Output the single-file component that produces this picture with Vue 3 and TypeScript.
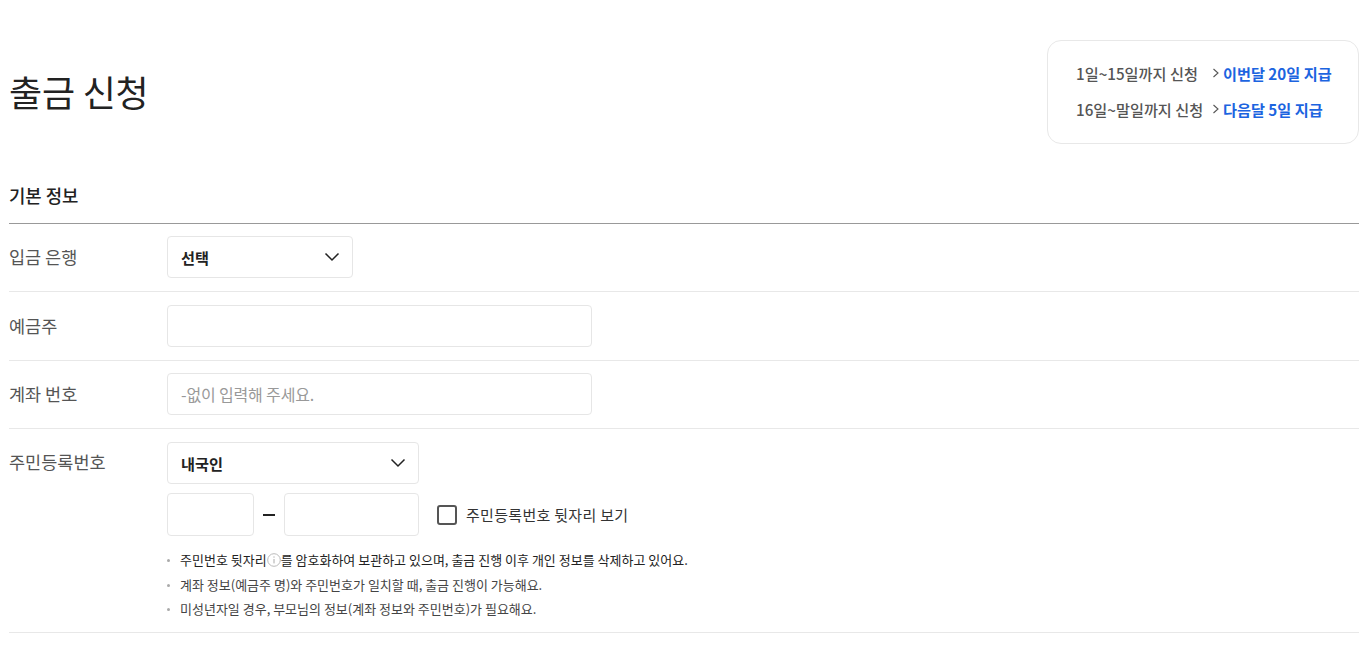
<script setup lang="ts">
const notes: string[] = [
  '계좌 정보(예금주 명)와 주민번호가 일치할 때, 출금 진행이 가능해요.',
  '미성년자일 경우, 부모님의 정보(계좌 정보와 주민번호)가 필요해요.',
]
</script>

<template>
  <main class="page">
    <header class="top">
      <h1 class="title">출금 신청</h1>
      <div class="schedule">
        <div class="sched-row">
          <span class="when">1일~15일까지 신청</span>
          <svg class="arrow" width="8" height="12" viewBox="0 0 8 12"><path d="M1.5 2 6 6 1.5 10" fill="none" stroke="#555" stroke-width="1.1" /></svg>
          <span class="pay">이번달 20일 지급</span>
        </div>
        <div class="sched-row">
          <span class="when">16일~말일까지 신청</span>
          <svg class="arrow" width="8" height="12" viewBox="0 0 8 12"><path d="M1.5 2 6 6 1.5 10" fill="none" stroke="#555" stroke-width="1.1" /></svg>
          <span class="pay">다음달 5일 지급</span>
        </div>
      </div>
    </header>

    <h2 class="section">기본 정보</h2>

    <section class="row">
      <div class="label">입금 은행</div>
      <div class="field select w186 lift">
        <span>선택</span>
        <svg width="16" height="10" viewBox="0 0 16 10"><path d="M1.5 1.5 8 8 14.5 1.5" fill="none" stroke="#222" stroke-width="1.5" /></svg>
      </div>
    </section>

    <section class="row tall">
      <div class="label">예금주</div>
      <input class="field w425" type="text" />
    </section>

    <section class="row">
      <div class="label">계좌 번호</div>
      <input class="field w425 lift" type="text" placeholder="-없이 입력해 주세요." />
    </section>

    <section class="row id-row">
      <div class="label">주민등록번호</div>
      <div class="id-body">
        <div class="field select w252">
          <span>내국인</span>
          <svg width="16" height="10" viewBox="0 0 16 10"><path d="M1.5 1.5 8 8 14.5 1.5" fill="none" stroke="#222" stroke-width="1.5" /></svg>
        </div>
        <div class="id-inputs">
          <input class="field w87" type="text" />
          <span class="dash"></span>
          <input class="field w135" type="text" />
          <label class="check">
            <span class="box"></span>
            <span>주민등록번호 뒷자리 보기</span>
          </label>
        </div>
        <ul class="notes">
          <li class="strong">
            주민번호 뒷자리<svg class="info" width="14" height="14" viewBox="0 0 14 14"><circle cx="7" cy="7" r="6.3" fill="none" stroke="#bbb" /><path d="M7 6v4.4M7 3.4v1.3" stroke="#aaa" fill="none" /></svg>를 암호화하여 보관하고 있으며, 출금 진행 이후 개인 정보를 삭제하고 있어요.
          </li>
          <li v-for="n in notes" :key="n">{{ n }}</li>
        </ul>
      </div>
    </section>
  </main>
</template>

<style>
html, body { margin: 0; background: #fff; }
</style>

<style scoped>
.page {
  box-sizing: border-box;
  width: 1369px;
  padding: 40px 10px 0 9px;
  font-family: "Noto Sans CJK KR", "Noto Sans", sans-serif;
  color: #222;
}
.top {
  display: flex;
  justify-content: space-between;
  align-items: center;
  height: 104px;
}
.title {
  margin: 0 0 2px;
  font-size: 36px;
  font-weight: 400;
  line-height: 52px;
  letter-spacing: -0.2px;
  color: #222;
}
.schedule {
  box-sizing: border-box;
  width: 312px;
  height: 104px;
  border: 1px solid #e8e8e8;
  border-radius: 14px;
  padding: 20px 0 0 28px;
  display: flex;
  flex-direction: column;
  gap: 12px;
}
.sched-row {
  display: flex;
  align-items: center;
  height: 24px;
  font-size: 15.2px;
  font-weight: 500;
}
.when { color: #555; width: 131px; white-space: nowrap; }
.arrow { margin: 0 3px 0 5px; flex: none; }
.pay { color: #1c64e0; font-weight: 700; white-space: nowrap; }
.section {
  margin: 0;
  height: 80px;
  box-sizing: border-box;
  padding-top: 39px;
  border-bottom: 1px solid #999;
  font-size: 17.8px;
  font-weight: 500;
  line-height: 24px;
  color: #222;
}
.row {
  display: flex;
  align-items: center;
  box-sizing: border-box;
  height: 68px;
  border-bottom: 1px solid #e8e8e8;
}
.tall { height: 69px; }
.label {
  width: 158px;
  flex: none;
  font-size: 17.5px;
  color: #555;
  line-height: 26px;
  margin-bottom: 1px;
}
.field {
  box-sizing: border-box;
  height: 42px;
  border: 1px solid #e6e6e6;
  border-radius: 4px;
  background: #fff;
  outline: none;
  padding: 0 13px;
  font-family: inherit;
  font-size: 16px;
  letter-spacing: -0.15px;
  color: #222;
}
.lift { margin-bottom: 1px; }
.field::placeholder { color: #999; opacity: 1; }
.select {
  display: flex;
  align-items: center;
  justify-content: space-between;
  font-weight: 700;
  font-size: 15.2px;
  letter-spacing: 0;
  padding-right: 12px;
  padding-bottom: 1px;
}
.w186 { width: 186px; }
.w425 { width: 425px; }
.w252 { width: 252px; }
.w87 { width: 87px; height: 43px; }
.w135 { width: 135px; height: 43px; }
.id-row {
  align-items: flex-start;
  height: 204px;
  padding-top: 13px;
}
.id-row .label { padding-top: 7px; }
.id-body { display: flex; flex-direction: column; }
.id-inputs {
  display: flex;
  align-items: center;
  margin-top: 9px;
}
.dash {
  width: 12px;
  height: 2px;
  background: #222;
  margin: 0 9px;
}
.check {
  display: flex;
  align-items: center;
  margin-left: 18px;
  font-size: 15px;
  letter-spacing: 0.3px;
  color: #333;
  font-weight: 400;
}
.box {
  box-sizing: border-box;
  width: 20px;
  height: 20px;
  border: 2px solid #555;
  border-radius: 3px;
  margin-right: 9px;
}
.notes {
  list-style: none;
  margin: 12px 0 0;
  padding: 0;
  font-size: 13px;
  line-height: 24.5px;
  color: #444;
}
.notes li {
  position: relative;
  padding-left: 13px;
}
.notes li::before {
  content: "";
  position: absolute;
  left: 0;
  top: 11px;
  width: 3px;
  height: 3px;
  background: #aaa;
  border-radius: 50%;
}
.notes .strong { color: #222; }
.info { vertical-align: -2px; }
</style>
